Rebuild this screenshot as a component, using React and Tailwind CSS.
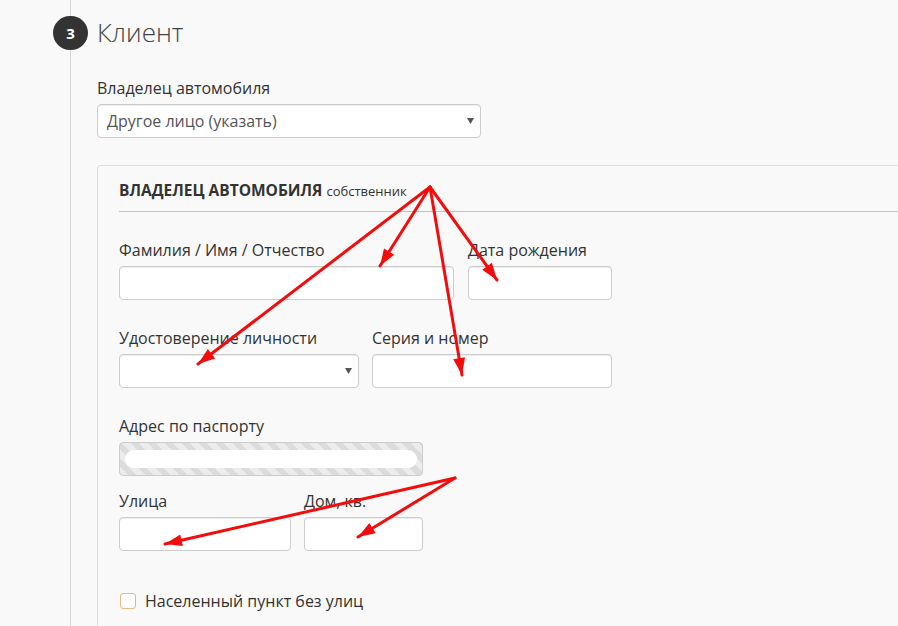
import React from 'react';

const font = { fontFamily: '"Open Sans", "Noto Sans", sans-serif' };

const Label = ({ children }) => (
  <label className="mb-[5px] block text-[16px] leading-[22px] text-[#333]">{children}</label>
);

const Input = ({ className = '' }) => (
  <div className={`h-[34px] rounded-[4px] border border-[#cccccc] bg-white shadow-[inset_0_1px_1px_rgba(0,0,0,0.075)] ${className}`} />
);

const SelectBox = ({ value, className = '' }) => (
  <div className={`flex h-[34px] items-center justify-between rounded-[4px] border border-[#cccccc] bg-white pl-[9px] pr-[6px] text-[16px] text-[#555] shadow-[inset_0_1px_1px_rgba(0,0,0,0.075)] ${className}`}>
    <span>{value}</span>
    <svg width="7" height="6" viewBox="0 0 7 6">
      <path d="M0 0 L7 0 L3.5 6 Z" fill="#555" />
    </svg>
  </div>
);

// стрелка-пометка поверх формы
const arrowHead = (x1, y1, x2, y2, len = 17, half = 6) => {
  const a = Math.atan2(y2 - y1, x2 - x1);
  const bx = x2 - len * Math.cos(a);
  const by = y2 - len * Math.sin(a);
  const px = -Math.sin(a) * half;
  const py = Math.cos(a) * half;
  return `${x2},${y2} ${bx + px},${by + py} ${bx - px},${by - py}`;
};

const arrows = [
  [430, 187, 380, 266],
  [430, 187, 497, 280],
  [430, 187, 198, 364],
  [430, 187, 462, 375],
  [455, 478, 165, 544],
  [455, 478, 358, 537],
];

export default function App() {
  return (
    <div className="relative h-[626px] w-[898px] overflow-hidden bg-[#f9f9f9] text-[#333]" style={font}>
      <div className="ml-[70px] h-full border-l border-[#d9d9d9] pl-[26px]">
        <div className="relative pt-[14px]">
          <div className="absolute left-[-44px] top-[16px] flex h-[34px] w-[35px] items-center justify-center rounded-full bg-[#333] text-[15px] font-bold text-white">
            3
          </div>
          <h2 className="text-[26px] font-light leading-[36px] text-[#444]">Клиент</h2>
        </div>

        <div className="mt-[27px]">
          <Label>Владелец автомобиля</Label>
          <SelectBox value="Другое лицо (указать)" className="w-[384px]" />
        </div>

        <section className="mt-[27px] h-[600px] rounded-tl-[4px] border-l border-t border-[#dddddd] pl-[21px] pt-[14px]">
          <div className="flex h-[32px] items-baseline gap-[4px] border-b border-[#e3bc8c] leading-[21px]">
            <span className="text-[15.5px] font-bold uppercase text-[#333]">Владелец автомобиля</span>
            <span className="text-[13px] text-[#333]">собственник</span>
          </div>

          <div className="mt-[27px] flex gap-[14px]">
            <div className="w-[335px]">
              <Label>Фамилия / Имя / Отчество</Label>
              <Input />
            </div>
            <div className="w-[144px]">
              <Label>Дата рождения</Label>
              <Input />
            </div>
          </div>

          <div className="mt-[27px] flex gap-[13px]">
            <div className="w-[240px]">
              <Label>Удостоверение личности</Label>
              <SelectBox value="" />
            </div>
            <div className="w-[240px]">
              <Label>Серия и номер</Label>
              <Input />
            </div>
          </div>

          <div className="mt-[27px] w-[304px]">
            <Label>Адрес по паспорту</Label>
            <div className="flex h-[34px] items-center rounded-[4px] border border-[#cccccc] bg-[repeating-linear-gradient(45deg,#ececec_0,#ececec_6px,#dcdcdc_6px,#dcdcdc_12px)] px-[5px]">
              <div className="h-[18px] w-full rounded-full bg-white" />
            </div>
          </div>

          <div className="mt-[14px] flex gap-[13px]">
            <div className="w-[172px]">
              <Label>Улица</Label>
              <Input />
            </div>
            <div className="w-[119px]">
              <Label>Дом, кв.</Label>
              <Input />
            </div>
          </div>

          <div className="mt-[39px] flex items-center gap-[9px] pl-[1px]">
            <div className="h-[16px] w-[16px] rounded-[3px] border border-[#e4bb85] bg-white" />
            <span className="text-[16px] leading-[22px] text-[#333]">Населенный пункт без улиц</span>
          </div>
        </section>
      </div>

      <svg className="pointer-events-none absolute inset-0" width="898" height="626">
        {arrows.map(([x1, y1, x2, y2], i) => (
          <g key={i}>
            <line x1={x1} y1={y1} x2={x2} y2={y2} stroke="#f20c0c" strokeWidth="3" strokeLinecap="round" />
            <polygon points={arrowHead(x1, y1, x2, y2)} fill="#f20c0c" />
          </g>
        ))}
      </svg>
    </div>
  );
}
